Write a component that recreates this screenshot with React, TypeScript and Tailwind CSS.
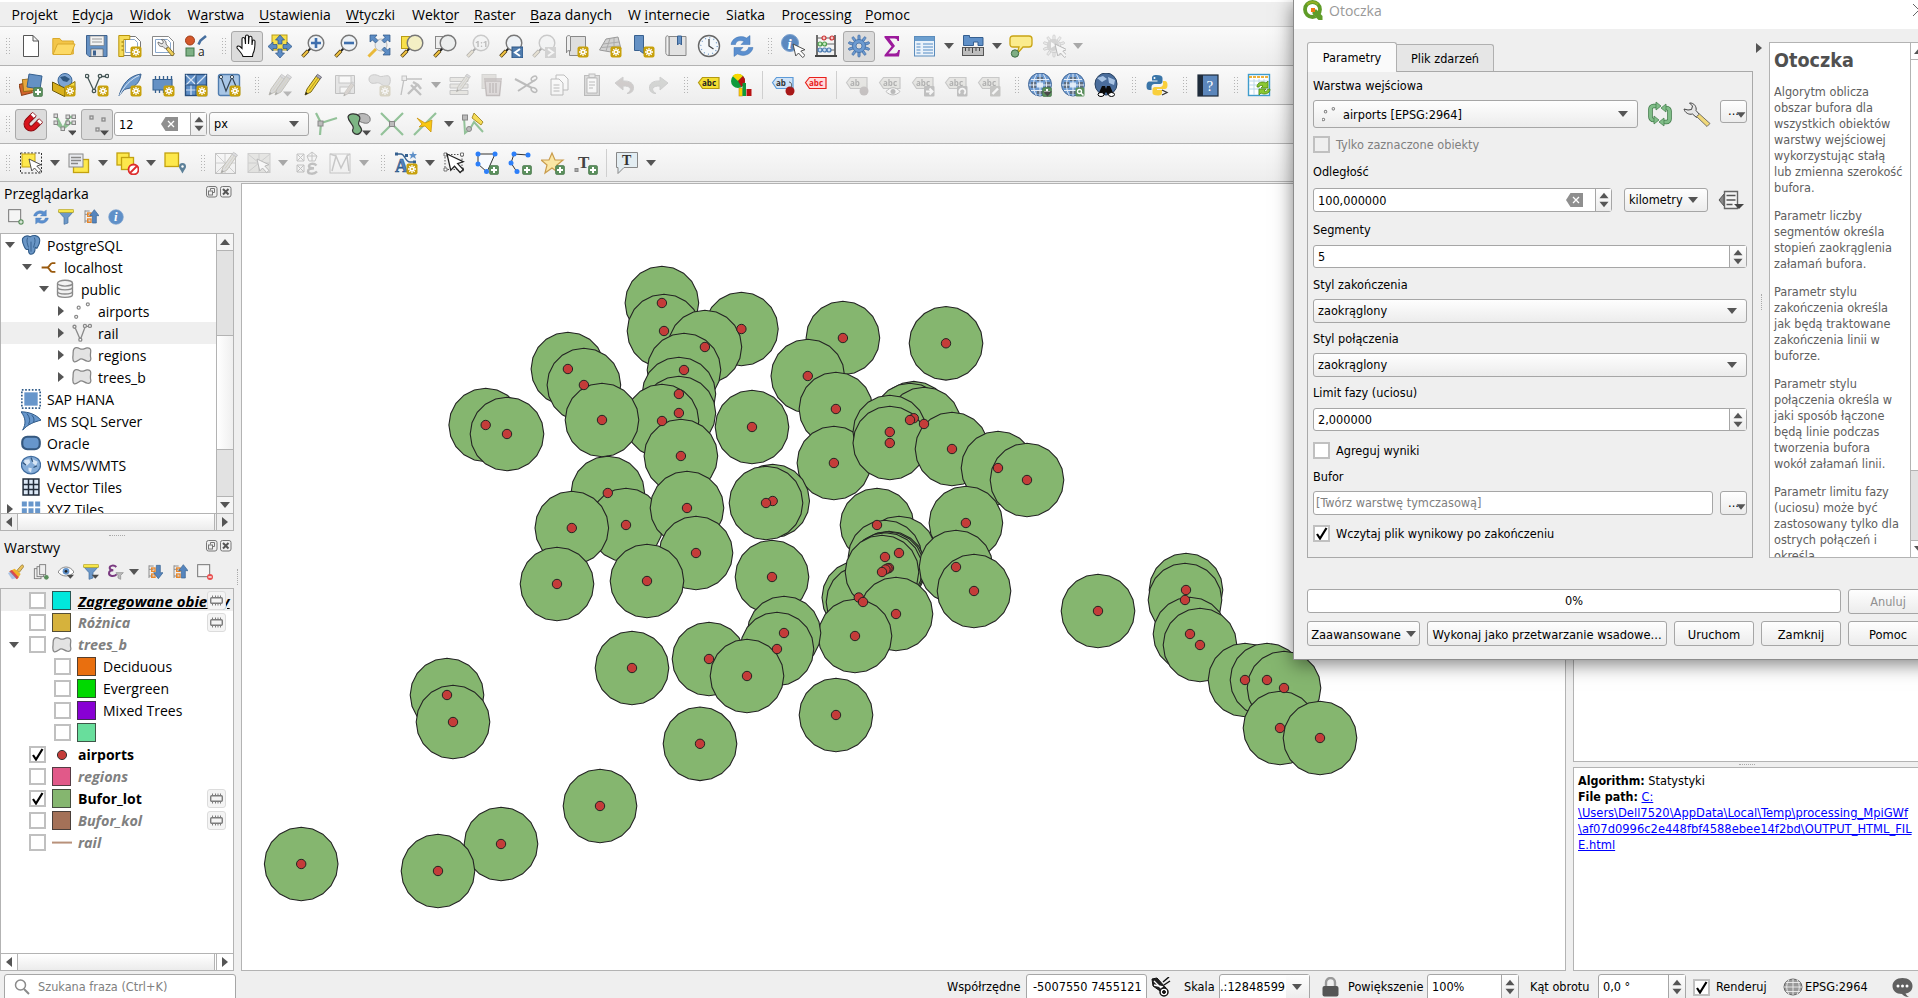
import React, { ReactNode } from "react";

const UI = "font-['Open_Sans','Noto_Sans',sans-serif] text-[14px]";
const DLG = "font-['DejaVu_Sans_Condensed','DejaVu_Sans',sans-serif] text-[12.6px]";

/* ---------- small drawing helpers ---------- */

function Ico({ children, dim, size = 24 }: { children: ReactNode; dim?: boolean; size?: number }) {
  return (
    <svg width={size} height={size} viewBox="0 0 24 24" fill="none" className={dim ? "shrink-0 opacity-35 grayscale-[0.7]" : "shrink-0"}>
      {children}
    </svg>
  );
}

const Star = () => (
  <g>
    <rect x="12.5" y="12.5" width="11" height="11" rx="2" fill="#c8a10c" />
    <path d="M18 14v8M14 18h8M15.3 15.3l5.4 5.4M20.7 15.3l-5.4 5.4" stroke="#fff" strokeWidth="1.3" />
    <circle cx="18" cy="18" r="1" fill="#c8a10c" />
  </g>
);
const Plus = () => (
  <g>
    <rect x="14.5" y="14.5" width="9" height="9" rx="1.5" fill="#5a8f5c" stroke="#3f6f43" strokeWidth=".6" />
    <path d="M19 16v6M16 19h6" stroke="#fff" strokeWidth="2" />
  </g>
);
const Drop = () => <path d="M15 18.5h9l-4.5 5z" fill="#4a4a4a" />;

function Tri({ dim, dir = "down", className = "" }: { dim?: boolean; dir?: "down" | "up" | "right" | "left"; className?: string }) {
  const d = { down: "M0 2h10L5 8z", up: "M0 8h10L5 2z", right: "M2 0v10l6-5z", left: "M8 0v10L2 5z" }[dir];
  return (
    <svg width="10" height="10" viewBox="0 0 10 10" className={`shrink-0 ${className}`}>
      <path d={d} fill={dim ? "#a8a8a8" : "#555"} />
    </svg>
  );
}

const Lens = ({ fill = "#eef2f6" }: { fill?: string }) => (
  <g>
    <path d="M9.5 14.5L6 18" stroke="#222" strokeWidth="2" />
    <path d="M7 16.8L1.5 22.5" stroke="#4b3a10" strokeWidth="3.6" />
    <path d="M6.8 17L1.8 22.2" stroke="#f2c443" strokeWidth="2" />
    <circle cx="15" cy="9" r="7.8" fill={fill} stroke="#777" strokeWidth="1.4" />
  </g>
);
const Pencil = ({ c = "#f2d43a" }: { c?: string }) => (
  <g>
    <path d="M4 22l2-6L16 2l4 2.5L10 19z" fill={c} stroke="#7a6a1a" strokeWidth="1" />
    <path d="M8 17.5L18 3.5" stroke="#b59a1c" strokeWidth="1" />
    <path d="M15 3.300l1.500-2 4 2.700-1.200 2z" fill="#aab" stroke="#667" strokeWidth=".8" />
    <path d="M4 22l1-3 2 1.400z" fill="#222" />
  </g>
);
const Cursor = ({ x = 10, y = 8 }: { x?: number; y?: number }) => (
  <path transform={`translate(${x} ${y}) scale(.92)`} d="M0 0l3 13 3-3.200 4.500 5 2.500-2.400-4.500-4.700 4.500-1.500z" fill="#fff" stroke="#444" strokeWidth="1" />
);
const Gear = ({ c = "#6d9bd1", s = "#3f6ca5" }: { c?: string; s?: string }) => (
  <g>
    {[0, 36, 72, 108, 144, 180, 216, 252, 288, 324].map((a) => (
      <rect key={a} x="10.9" y="1" width="2.200" height="6" rx="1" fill={c} stroke={s} strokeWidth=".7" transform={`rotate(${a} 12 12)`} />
    ))}
    <circle cx="12" cy="12" r="6.500" fill={c} stroke={s} strokeWidth=".8" />
    <circle cx="12" cy="12" r="3" fill="#dcdcdc" stroke={s} strokeWidth=".8" />
  </g>
);
const Tag = ({ fill, stroke, color, text = "abc", y = 4 }: { fill: string; stroke: string; color: string; text?: string; y?: number }) => (
  <g>
    <path d={`M1.500 ${y + 5.500}l4-5H22v11H5.500z`} fill={fill} stroke={stroke} strokeWidth="1.200" />
    <text x="5" y={y + 9} fontSize="8" fontWeight="bold" fontFamily="Open Sans" fill={color}>
      {text}
    </text>
  </g>
);
const Globe = () => (
  <g>
    <circle cx="12" cy="11.500" r="11.500" fill="#6d9ad0" stroke="#476a98" strokeWidth="1" />
    <path d="M9 4h6v4H9zM3 9h5v6H3zM17 9h5v6h-5zM9 17h6v4H9z" fill="#555" opacity=".65" />
    <path d="M9 9.500h6v5H9z" fill="#dbe8f6" />
    <path d="M1 12h22M12 1v22M3 6.500h18M3 17.500h18M8.500 1.500c-4 6-4 15 0 21M15.500 1.500c4 6 4 15 0 21" stroke="#e6eef8" strokeWidth="1" />
  </g>
);
const Refresh = () => (
  <g fill="#5b8fcf" stroke="#3f73b0" strokeWidth=".5">
    <path d="M1 10.500C2 4 10 .5 16.500 4L20 1.500v9h-9l3-3C10 5.500 6 7 5.500 10.500z" />
    <path d="M23 13.500c-1 6.500-9 10-15.500 6.500L4 22.500v-9h9l-3 3c4 2 8 .5 8.500-3z" />
  </g>
);
const FunnelShape = () => (
  <g>
    <path d="M1 4h22l-8 9v8l-6 2V13z" fill="#6d98c8" stroke="#3f6c9f" strokeWidth="1" />
    <rect x="1" y="1" width="22" height="4" fill="#f7e64a" stroke="#b8a51c" />
  </g>
);
const Poly = () => (
  <path d="M2.500 4.500C4 2.500 7 3 9.500 4.500 12.500 6.300 15 4 18 3.500c3-.3 4.500 1 4.500 3.500 0 3-1 5 0 8.500.6 3-1.500 4.500-4 4-4-1-6-4-9-2.500-2.500 1.500-4.500 4-7 3C.5 19 .8 16 1.200 12.500 1.600 9 .8 6.500 2.500 4.500z" fill="#e3e3e3" stroke="#858585" strokeWidth="1.500" />
);
const Dots = () => (
  <g stroke="#8a8a8a" strokeWidth="1.500" fill="#fff">
    <circle cx="5" cy="19" r="1.800" /><circle cx="8" cy="8" r="1.800" /><circle cx="19" cy="4" r="1.800" />
  </g>
);
const VLine = ({ c = "#8a8a8a" }: { c?: string }) => (
  <g stroke={c} strokeWidth="1.600" fill="#fff">
    <path d="M3 4l7 16 6-16h6" fill="none" />
    <circle cx="3" cy="4.500" r="1.800" /><circle cx="10" cy="20" r="1.800" /><circle cx="15.500" cy="3.500" r="1.800" /><circle cx="21.500" cy="3.500" r="1.800" />
  </g>
);
const Points3 = () => (
  <g fill="none" stroke="#8a8a8a" strokeWidth="1.300">
    <rect x="5" y="4" width="3" height="3" /><rect x="17" y="6" width="3" height="3" /><rect x="11" y="16" width="3" height="3" />
  </g>
);

/* ---------- toolbar icons ---------- */

const icons = {
  newFile: <path d="M4.500 1.500h9.500l5.500 5.500v15.500h-15zM14 1.500V7h5.500" fill="#fff" stroke="#555" />,
  open: (
    <g stroke="#d9a92c"><path d="M.8 20V4.500h7l2 2.500h11.500V20z" fill="#f3c548" /><path d="M1 20.500L5.500 10H23l-4 10.500z" fill="#fcd965" /></g>
  ),
  save: (
    <g><path d="M1.500 1.500h20.500v21H4l-2.500-2.500z" fill="#6591c4" stroke="#3e628f" /><rect x="5" y="2" width="14" height="9.500" fill="#f3f3f3" stroke="#777" strokeWidth=".6" /><path d="M7 5h10M7 8h10" stroke="#999" /><rect x="6" y="15" width="12" height="7.500" fill="#e3e3e3" stroke="#555" strokeWidth=".6" /><rect x="8" y="16.500" width="3" height="5" fill="#3e628f" /></g>
  ),
  layout: (
    <g><path d="M4.500 2.500h13l5 5v14h-18z" fill="#fff" stroke="#777" /><path d="M7.500 5.500h9l3 3v10h-12z" stroke="#8aa8cc" /><path d="M.8 1.500h11v4h-6v17h-5z" fill="#f6dc58" stroke="#b9950f" /><path d="M3.500 8h2M3.500 12h2M3.500 16h2" stroke="#8a6c00" /><Star /></g>
  ),
  manager: (
    <g><path d="M1.500 2.500h16l5 5v14h-21z" fill="#fff" stroke="#888" /><path d="M4.500 5.500h12l3 3v10h-15z" stroke="#8aa8cc" /><path d="M7 8c0 4 3 5 5 4.500l2.500 2.500 2.500-2.500-2-2.500C15.500 7 13 5 10.500 5.500l2 2.500-1.500 2z" fill="#e2e2e2" stroke="#555" strokeWidth=".8" /><path d="M15 15l6 7 2.500-2-6-7z" fill="#efcf5b" stroke="#6f5c1c" strokeWidth=".8" /></g>
  ),
  style: (
    <g><circle cx="6" cy="6.500" r="4.500" fill="#d4572a" stroke="#9e3b16" /><path d="M14.500 10.500l2-4L22 2" stroke="#466f9f" strokeWidth="2.600" /><rect x="2" y="14" width="8" height="8" fill="#7fb186" stroke="#3f7448" /><text x="14" y="22" fontSize="12" fontFamily="Open Sans" fill="#222">a</text></g>
  ),
  hand: <path d="M8 22.500c-1-3-4-6-6-8.500-.5-2 1.500-2.500 3-1.500l2 2V5c0-2 2.500-2 3 0l.5 5V2.500c0-2 3-2 3 0V10l.5-6.500c.5-1.800 3-1.500 3 .5V11l.5-4c.5-1.500 2.500-1.200 2.500.5 0 5 0 9-2 12l-.5 3z" fill="#fff" stroke="#111" strokeWidth="1.100" />,
  pan: (
    <g><rect x="4" y="1" width="15" height="15" fill="#f8e04a" stroke="#b89c18" /><g fill="#5c8cc4" stroke="#2d5584" strokeWidth=".7"><path d="M12 1l4.500 5H14v4h-4V6H7.500z" /><path d="M12 24l4.500-5H14v-4h-4v4H7.500z" /><path d="M0 12.500L5 8v2.500h4v4H5V17z" /><path d="M24 12.500L19 8v2.500h-4v4h4V17z" /></g></g>
  ),
  zoomIn: <g><Lens /><path d="M15 4v10M10 9h10" stroke="#3e6fae" strokeWidth="2.600" /></g>,
  zoomOut: <g><Lens /><path d="M10 9h10" stroke="#3e6fae" strokeWidth="2.600" /></g>,
  zoomFull: (
    <g><path d="M9 15L1.500 22.500" stroke="#e9b93a" strokeWidth="3" /><circle cx="14" cy="11" r="6" fill="#e9edf1" stroke="#bbb" /><g fill="#5c8cc4" stroke="#2d5584" strokeWidth=".7"><path d="M3 1h7L8 3.500l3 3L8.500 9l-3-3L3 8z" /><path d="M23 1h-7l2 2.500-3 3L17.500 9l3-3L23 8z" /><path d="M23 21h-7l2-2.500-3-3 2.500-2.500 3 3L23 14z" /></g></g>
  ),
  zoomSel: <g><rect x="1.500" y="2.500" width="12" height="12" fill="#f8e04a" stroke="#b89c18" /><Lens fill="#f3efc4" /></g>,
  zoomLayer: <g><rect x="2.500" y="2.500" width="12" height="12" fill="#eee" stroke="#888" /><Lens fill="#eceeee" /></g>,
  zoomNative: <g><Lens /><text x="9" y="12.500" fontSize="9" fontWeight="bold" fontFamily="Open Sans" fill="#555">1:1</text></g>,
  zoomLast: <g><Lens /><rect x="13" y="13" width="11" height="11" fill="#4f7cae" stroke="#2d5584" /><path d="M21 15l-5 3.500 5 3.500" stroke="#fff" strokeWidth="2" /></g>,
  zoomNext: <g><Lens /><rect x="13" y="13" width="11" height="11" fill="#999" /><path d="M16 15l5 3.500-5 3.500" stroke="#fff" strokeWidth="2" /></g>,
  newMap: <g><path d="M4.500 2.500h16v19h-16z" fill="#dedede" stroke="#888" /><path d="M1.500 3c1-2 4-2 4 0v14c-2-1-4 0-4 2z" fill="#efefef" stroke="#888" /><Star /></g>,
  map3d: <g><path d="M1.500 16L8 5l12-2 3 12-10 3z" fill="#d2d2d2" stroke="#999" /><path d="M5 10l16-2M3 13.500l19-1.500M12 4.500L8 17M16 4l0 13" stroke="#aaa" /><Star /></g>,
  bookmark: <g><path d="M3.500 1.500h9v18l-4-3-5 0z" fill="#6591c4" stroke="#38608f" /><Star /></g>,
  bookmarks: <g><path d="M5 2.500h17v19H5z" fill="#e2e2e2" stroke="#888" /><path d="M1.800 4c0-3 3.200-3 3.200 0v17.500c-2 0-3.200-1-3.200-3z" fill="#f0f0f0" stroke="#888" /><path d="M13.500 2h4v9l-2-2-2 2z" fill="#6591c4" stroke="#38608f" /></g>,
  clock: (
    <g><circle cx="12" cy="12" r="10.500" fill="#f4f8fb" stroke="#666" strokeWidth="1.400" /><circle cx="12" cy="12" r="8.200" stroke="#7aa0cc" strokeDasharray="1 3.300" strokeWidth="1.400" /><path d="M12 5v7l4.500 3" stroke="#444" strokeWidth="1.300" /></g>
  ),
  refresh: <Refresh />,
  identify: <g><circle cx="9" cy="9" r="8.500" fill="#5b88bf" stroke="#7ea3cf" /><text x="6.500" y="14.500" fontSize="15" fontStyle="italic" fontWeight="bold" fontFamily="Liberation Serif" fill="#fff">i</text><Cursor x={12} y={10} /></g>,
  abacus: (
    <g><path d="M3 1v20M21 1v20" stroke="#444" strokeWidth="1.500" /><path d="M3 4h18M3 10h18M3 16h18" stroke="#666" /><path d="M1 22h22" stroke="#444" strokeWidth="2" /><g strokeWidth="1.200"><g fill="#f7c5c5" stroke="#c33"><circle cx="10" cy="4" r="2" /><circle cx="18" cy="4" r="2" /></g><g fill="#c9efc4" stroke="#4a9a4a"><circle cx="6" cy="10" r="2" /><circle cx="10.500" cy="10" r="2" /></g><g fill="#c6dcf2" stroke="#4a7ab0"><circle cx="6" cy="16" r="2" /><circle cx="10.500" cy="16" r="2" /><circle cx="15" cy="16" r="2" /></g></g></g>
  ),
  gear: <Gear />,
  sigma: <path d="M4.500 2h14.500v5h-1.500c-.5-1.800-1-2.500-3-2.500H9.500l5.500 7.500-6.500 7.500h6c2.500 0 3-1 3.800-3.500H20l-1 6.500H4.500v-1.500l7-8.500-7-9z" fill="#9c1a9c" />,
  table: <g><rect x="1.500" y="2.500" width="20" height="19.500" fill="#eaf2fa" stroke="#5b8cbc" /><rect x="2" y="3" width="19" height="4" fill="#6c9fcf" /><path d="M3.500 10h4M10 10h10M3.500 13h4M10 13h10M3.500 16h4M10 16h10M3.500 19h4M10 19h10" stroke="#86aed6" strokeWidth="1.400" /></g>,
  measure: <g><path d="M2.500 1.500h6V3.500h13.500v8h-5V8h-4.500v3.500h-10z" fill="#5f90c8" stroke="#355f90" /><rect x="1.500" y="13.500" width="21" height="8" fill="#bdbdbd" stroke="#555" /><path d="M4.500 14v3M8 14v3M11.500 14v5M15 14v3M18.500 14v3" stroke="#444" /></g>,
  note: <g><path d="M4 2h16c2 0 3 1 3 3v5c0 2-1 3-3 3h-6l-6 7 2-7H4c-2 0-3-1-3-3V5c0-2 1-3 3-3z" fill="#fbec8d" stroke="#c9a415" strokeWidth="1.300" /><circle cx="6" cy="19.500" r="3.700" fill="#7fae84" stroke="#3d6c43" /></g>,
  action: <g><Gear c="#ddd" s="#777" /><circle cx="11" cy="11" r="6" fill="#999" /><path d="M9 8l5 3-5 3z" fill="#fff" /><Cursor x={13} y={10} /></g>,

  datasource: <g><rect x="1" y="10" width="11" height="11" fill="#d2642c" stroke="#8c3d14" transform="rotate(-14 7 15)" /><rect x="4" y="6" width="13" height="12" fill="#e8a83d" stroke="#9a6a18" transform="rotate(-6 10 12)" /><path d="M10 1l13 2-2 13-13-2z" fill="#6591c4" stroke="#35608f" /><Plus /></g>,
  geopackage: <g><circle cx="13" cy="7.500" r="7" fill="#7da4d2" stroke="#3b6697" /><path d="M8 4l5-1 5 3-3 3-4-1z" fill="#2f567f" /><path d="M.5 9l12 6v8.500l-12-6z" fill="#d9b01c" stroke="#6e5a0b" /><path d="M12.500 15L23 8.500V17l-10.500 6.500z" fill="#fbe24a" stroke="#8a7310" /><Star /></g>,
  newShape: <g><g stroke="#455" strokeWidth="1.300" fill="#fff"><path d="M2 3l7 15 6-14.500h7" fill="none" /><circle cx="2" cy="3" r="1.700" /><circle cx="9" cy="18" r="1.700" /><circle cx="15" cy="3" r="1.700" /><circle cx="22" cy="3" r="1.700" /></g><Star /></g>,
  feather: <g><path d="M1 23C4 12 10 3 23 1c-1 8-5 12-11 14-3 1-5 .5-7 3z" fill="#6f9bcd" stroke="#39608f" /><path d="M1.500 22.500C6 13 13 6 21 2.500" stroke="#dce9f6" /><Star /></g>,
  chip: <g><path d="M4.500 3v17M8.500 3v17M12.500 3v17M16.500 3v17M20.500 3v17" stroke="#35608f" strokeWidth="1.300" /><rect x="2" y="6.500" width="19" height="10.500" fill="#6591c4" stroke="#35608f" /><Star /></g>,
  mesh: <g><rect x="1.500" y="1.500" width="21" height="21" fill="#5f8fc7" stroke="#284e7c" strokeWidth="1.400" /><path d="M2 2l10 10M2 12L12 2M12 12L22 2M7 12v10M2 17h20" stroke="#d6e4f3" strokeWidth="1.200" /><path d="M12 1.500v21M1.500 12h21" stroke="#284e7c" /><Star /></g>,
  newVirtual: <g><rect x="1.500" y="1.500" width="21" height="21" rx="2" fill="#a8c6e6" stroke="#4f7cae" strokeWidth="1.400" /><path d="M4 4l5 14L15 4l6 14" stroke="#345" strokeWidth="1.200" /><circle cx="4" cy="4" r="1.600" fill="#fff" stroke="#345" /><circle cx="15" cy="4" r="1.600" fill="#fff" stroke="#345" /><Star /></g>,
  edits: <g><g transform="translate(-3 0)"><Pencil c="#aaa" /></g><g transform="translate(3 0)"><Pencil c="#999" /></g><Drop /></g>,
  pencil: <Pencil />,
  saveEdits: <g><path d="M1.500 2.500h19v18h-19z" fill="#ccc" stroke="#666" /><rect x="5" y="3" width="12" height="7" fill="#fff" stroke="#777" /><rect x="6" y="14" width="10" height="6" fill="#fff" stroke="#777" /><g transform="translate(7 8) scale(.68)"><Pencil c="#c99" /></g></g>,
  addPoly: <g><path d="M2 6c0-5 7-5 10-3s10-3 11 2-1 9-5 8-5-4-9-3S2 10 2 6z" fill="#bbb" stroke="#777" /><Star /></g>,
  vertex: <g><path d="M1 22L4 6h18" stroke="#666" strokeWidth="1.300" /><rect x="2" y="3" width="4.500" height="4.500" fill="#ddd" stroke="#666" /><path d="M8 21l9-9M13 9l5 3 3 4M11 12l10 10" stroke="#666" strokeWidth="2.400" /></g>,
  tableEdit: <g><path d="M2 4.500h18v4H2zM2 11h18v4H2zM2 17.500h18v4H2z" fill="#d8d0b0" stroke="#777" /><g transform="translate(5 0) scale(.85)"><Pencil c="#bbb" /></g></g>,
  trash: <g><rect x="1" y="1.500" width="14" height="14" fill="#c9b6a0" stroke="#998" /><path d="M4 8h16l-1.500 14.500h-13zM3 6h18" fill="#cfa9a9" stroke="#855" strokeWidth="1.400" /><path d="M9 10v10M12 10v10M15 10v10" stroke="#855" strokeWidth="1.500" /></g>,
  cut: <g><path d="M1 6l17 9M4 18l17-11" stroke="#555" strokeWidth="2" /><ellipse cx="20" cy="5.500" rx="3" ry="2" stroke="#555" strokeWidth="1.500" transform="rotate(-30 20 5.500)" /><ellipse cx="20" cy="17" rx="3" ry="2" stroke="#555" strokeWidth="1.500" transform="rotate(30 20 17)" /></g>,
  copy: <g fill="#fff" stroke="#555"><path d="M9 2h8l4 4v11H9z" /><path d="M4 6h8l4 4v12H4z" /><path d="M6.500 12h6M6.500 15h6M6.500 18h6" /></g>,
  paste: <g fill="#fff" stroke="#555"><rect x="4.500" y="2.500" width="15" height="20" fill="#aaa" /><path d="M7 5h10v15H7z" /><rect x="9" y="1" width="6" height="3.500" fill="#ccc" /><path d="M9 9h6M9 12h6M9 15h4" /></g>,
  undo: <path d="M2 10l8-6v4c7-.5 11 2.500 10.500 7.500-.5 3.500-3 5-6.500 5 2.500-1.500 4-3.500 3-5.500-1-1.500-3.500-2-7-2v4z" fill="#a08078" stroke="#888" />,
  redo: <path d="M22 10l-8-6v4C7 7.500 3 10.500 3.500 15.500c.5 3.500 3 5 6.500 5-2.500-1.500-4-3.500-3-5.500 1-1.500 3.500-2 7-2v4z" fill="#93a090" stroke="#888" />,
  abc: <Tag fill="#f4de32" stroke="#b49a10" color="#222" />,
  diagram: <g><path d="M8 8V1.500A7 7 0 0 1 13.500 5z" fill="#f8d800" /><circle cx="8" cy="8" r="7" fill="#0f9a3c" /><path d="M8 8L2.500 3A7 7 0 0 1 13 3z" fill="#f8d800" /><path d="M8 8l5-5a7 7 0 0 1-1.500 11z" fill="#b81212" /><rect x="9" y="15" width="3.500" height="8" fill="#f8d800" stroke="#c8821c" strokeWidth=".6" /><rect x="12.500" y="10" width="3.500" height="13" fill="#0f9a3c" /><rect x="16.500" y="16" width="5" height="7" fill="#b81212" /></g>,
  pinLabel: <g><Tag fill="#cfe3f7" stroke="#5e9bd8" color="#333" text="ab" /><circle cx="19" cy="18" r="4.500" fill="#a81818" /><path d="M18 9c3 0 3 4 2 6" stroke="#555" /></g>,
  abcRed: <Tag fill="#ffdcdc" stroke="#e8201c" color="#e8201c" />,
  tagPin: <g><Tag fill="#cfcbb0" stroke="#777" color="#333" text="ab" /><circle cx="19" cy="18" r="4.500" fill="#866" /></g>,
  tagEye: <g><Tag fill="#cfcbb0" stroke="#777" color="#333" /><path d="M8 18.500c4-5 10-5 14 0-4 4.500-10 4.500-14 0z" fill="#fff" stroke="#555" /><circle cx="15" cy="18.500" r="2.500" fill="#555" /></g>,
  tagMove: <g><Tag fill="#cfcbb0" stroke="#777" color="#333" /><rect x="13" y="13" width="10.500" height="10.500" rx="1" fill="#666" /><path d="M15 18.500h6M18.500 15.500l3 3-3 3" stroke="#fff" strokeWidth="2" /></g>,
  tagRotate: <g><Tag fill="#cfcbb0" stroke="#777" color="#333" /><rect x="13" y="13" width="10.500" height="10.500" rx="1" fill="#666" /><path d="M16 20.500a3 3 0 1 1 4 .5" stroke="#fff" strokeWidth="1.800" /></g>,
  tagEdit: <g><Tag fill="#cfcbb0" stroke="#777" color="#333" /><rect x="13" y="13" width="10.500" height="10.500" rx="1" fill="#776" /><path d="M15.500 21l5.500-5.500" stroke="#fff" strokeWidth="2.400" /></g>,
  globeAdd: <g><Globe /><Plus /><Drop /></g>,
  globeFind: <g><Globe /><rect x="14.500" y="14.500" width="9" height="9" rx="1.500" fill="#5a8f5c" /><circle cx="18.500" cy="18.500" r="2" stroke="#fff" strokeWidth="1.300" /><path d="M20 20l2.500 2.500" stroke="#fff" strokeWidth="1.500" /></g>,
  binoculars: <g><circle cx="12" cy="11" r="11" fill="#4a6d9c" stroke="#27405f" /><path d="M3 5l6-2 4 3-5 3zM14 4l7 3-1 5-5-2z" fill="#a9c4e4" /><path d="M4 22l4-9h3l1 3 1-3h3l4 9h-6l-2-3-2 3z" fill="#0a0a0a" /><ellipse cx="7" cy="21.500" rx="3" ry="2" fill="#fff" stroke="#000" /><ellipse cx="17.500" cy="21.500" rx="3" ry="2" fill="#fff" stroke="#000" /></g>,
  python: (
    <g><path d="M11.500 2c-4 0-4.500 1.500-4.500 3v2.500h5.500v1H4.500C2.500 8.500 1.500 10 1.500 13s1 4 3 4H6.500v-3c0-2 1.500-3 3-3H15c1.500 0 2.500-1 2.500-2.500V5c0-2-2-3-6-3z" fill="#3a75a8" /><path d="M12.500 22.500c4 0 4.500-1.500 4.500-3V17h-5v-1h8c1.500 0 2.500-1.500 2.500-4s-1-4-2.500-4h-2v3c0 2-1.500 3-3 3H10c-1.500 0-2.500 1-2.500 2.500V20c0 1.500 1.500 2.500 5 2.500z" fill="#f9cf3c" /><circle cx="9.500" cy="5" r="1" fill="#fff" /><path d="M17 17l5 2.500-5 2.500" stroke="#333" strokeWidth="1.300" /></g>
  ),
  help: <g><rect x="2" y="2" width="20" height="21" fill="#5b86bb" stroke="#1e2b3a" strokeWidth="1.200" /><rect x="2" y="2" width="5" height="21" fill="#1e2b3a" /><text x="10.500" y="18" fontSize="15" fontFamily="Liberation Serif" fill="#fff">?</text></g>,
  sheet: <g><rect x="1.500" y="1.500" width="21" height="21" fill="#fdfeff" stroke="#3f9ccc" strokeWidth="1.400" /><path d="M2 4h20" stroke="#efb23a" strokeWidth="2" strokeDasharray="3 1" /><path d="M2 8h20M2 12h20M2 16h20M7 6v16M12 6v16M17 6v16" stroke="#bcd8ea" /><path d="M10 14c0-5 6-6 9-4l2-2v7h-7l2-2c-2-1-4-.5-4 1z" fill="#8cc832" stroke="#4c8a10" strokeWidth=".8" /><path d="M23 16c0 5-6 6-9 4l-2 2v-6h7l-2 2c2 1 3 0 4-2z" fill="#8cc832" stroke="#4c8a10" strokeWidth=".8" /></g>,

  magnet: <g transform="rotate(45 12 12)"><path d="M5 4v8a7 7 0 0 0 14 0V4h-5v8a2 2 0 0 1-4 0V4z" fill="#d8141c" stroke="#8c0a10" /><path d="M5 2.500h5V6H5zM14 2.500h5V6h-5z" fill="#fff" stroke="#8c0a10" strokeWidth=".8" /></g>,
  snapV: <g transform="translate(1 0)"><path d="M3 4l7 13L16 5h6M3 11l7 6 7-6h5" stroke="#8cbf92" strokeWidth="2.400" /><g fill="#ddd" stroke="#888" strokeWidth="1"><rect x="1" y="2" width="3.500" height="3.500" /><rect x="1" y="9" width="3.500" height="3.500" /><rect x="8" y="15" width="3.500" height="3.500" /><rect x="13" y="3" width="3.500" height="3.500" /><rect x="19" y="3" width="3.500" height="3.500" /><rect x="13" y="9" width="3.500" height="3.500" /><rect x="19" y="9" width="3.500" height="3.500" /></g><Drop /></g>,
  snapPts: <g><Points3 /><Drop /></g>,
  topo: <g><path d="M2 1l5 10-1 12M7 11l16-5" stroke="#93c299" strokeWidth="2.200" /><rect x="4" y="9" width="5" height="5" fill="#bbb" stroke="#888" /></g>,
  overlap: <g><path d="M10 3c5-3 12-1 13 3s-2 6-6 5-8-3-7-8z" fill="#b9b9b9" stroke="#777" /><path d="M1 5c1-4 8-4 11-1s-2 6 0 9 4 5 1 8-9 0-7-4-5-7-5-12z" fill="#7db584" stroke="#333" strokeWidth="1.200" /><Drop /></g>,
  cross: <g><path d="M1 1l22 22M23 1L1 23" stroke="#93c299" strokeWidth="2.200" /><rect x="9.500" y="9.500" width="5" height="5" fill="#bbb" stroke="#888" /></g>,
  selfSnap: <g><path d="M23 1L1 23" stroke="#93c299" strokeWidth="2.200" /><path d="M4 6l8 5 7-3-1 12-6-6-6 1 3-3z" fill="#f8c811" stroke="#c78d00" strokeWidth=".7" /></g>,
  trace: <g><path d="M3 5l1 16 5-4 4-7 9 10" stroke="#93c299" strokeWidth="2" /><rect x="1.500" y="3" width="5" height="5" fill="#bbb" stroke="#888" /><circle cx="8" cy="17" r="2.500" fill="#bbb" stroke="#888" /><path d="M13 1l-2 5 9 7 2-3z" fill="#f6dc58" stroke="#967a12" strokeWidth=".8" /></g>,

  select: <g><rect x="1.500" y="2" width="21" height="20" stroke="#333" strokeDasharray="2 1.500" /><rect x="3" y="3" width="13" height="13" fill="#fde84c" stroke="#c3a20f" /><Cursor x={10} y={8} /></g>,
  selForm: <g><rect x="6.500" y="8.500" width="15" height="13" fill="#fde84c" stroke="#c3a20f" strokeWidth="1.300" /><rect x="2" y="3" width="14" height="13" fill="#e8eaee" stroke="#888" /><path d="M4 6.500h10M4 9.500h10M4 12.500h7" stroke="#888" strokeWidth="1.300" /></g>,
  deselect: <g fill="#fde84c" stroke="#c3a20f" strokeWidth="1.300"><rect x="2" y="2" width="12" height="12" /><rect x="6.500" y="6.500" width="12" height="12" /><circle cx="18.500" cy="18.500" r="5" fill="#fff" stroke="#dd2c2c" strokeWidth="1.800" /><path d="M15 22l7-7" stroke="#dd2c2c" strokeWidth="1.800" /></g>,
  selLoc: <g><rect x="2" y="2" width="13.500" height="13.500" fill="#fde84c" stroke="#c3a20f" strokeWidth="1.300" /><path d="M19.500 22.500c-2-4-3.500-5-3.500-7a3.500 3.500 0 0 1 7 0c0 2-1.500 3-3.500 7z" fill="#5d8199" /><circle cx="19.500" cy="15.500" r="1.200" fill="#fff" /></g>,
  mesh1: <g><rect x="1.500" y="2.500" width="20" height="20" stroke="#666" /><path d="M2 3l19 19M21 3L2 22M11 3v19M2 12h19" stroke="#888" /><g transform="translate(3 0)"><Pencil c="#bbb" /></g></g>,
  mesh2: <g><rect x="1" y="2.500" width="22" height="19" fill="#c9c9b4" stroke="#888" /><path d="M1 3l22 18M23 3L1 21M12 3v18M1 12h22" stroke="#888" /><Cursor x={10} y={8} /></g>,
  mesh3: <g stroke="#666"><path d="M2 3h7v7H2zM2 3l7 7M9 3l-7 7M2 14h7v7H2zM2 14l7 7M9 14l-7 7M17 1l5 4-2 5h-6l-2-5zM17 1v9M12 5h10" /><path d="M21.500 14.500c-3-3-8-1.500-7.500 1 .3 1.500 2.500 1.700 5 1.700-3.500 0-6 .6-6 3 0 3 6 3.500 9 .3" strokeWidth="2.400" /></g>,
  mesh4: <g stroke="#777"><rect x="2" y="3" width="20" height="19" /><path d="M4 20L8 5l5 12 6-12 2 15M2 3l6 2M19 5l3-2" strokeWidth="1.500" /></g>,
  annot: <g><path d="M2 3h5c4 0 4 8 9 8h5" stroke="#35608f" strokeWidth="1.300" /><path d="M1 1.500h3v3H1zM11 3h3v3h-3zM19 9.500h3v3h-3z" fill="#35608f" /><path d="M19 0l1 3h3l-2 2 1 3-3-2-3 2 1-3-2-2h3z" fill="#5f90c8" /><text x="1" y="21" fontSize="18" fontWeight="bold" fontFamily="Liberation Serif" fill="#4f82bd" stroke="#27507f" strokeWidth=".6">A</text><Star /></g>,
  selAnnot: <g><rect x="3" y="3.500" width="17" height="15" stroke="#555" strokeDasharray="1.500 1.500" /><path d="M2 2h3v3H2zM18.500 2h3v3h-3zM2 17h3v3H2zM18.500 17h3v3h-3z" fill="#fff" stroke="#555" strokeWidth=".8" /><g transform="translate(5 3) scale(1.250)"><path d="M0 0l3 13 3-3.200 4.500 5 2.500-2.400-4.500-4.700 4.500-1.500z" fill="#fff" stroke="#222" /></g></g>,
  polyAnnot: <g><path d="M3 3h17l-8 18-9-8z" fill="#f7faff" stroke="#333" /><g fill="#2d7ff9"><circle cx="3" cy="3" r="2.500" /><circle cx="20" cy="3" r="2.500" /><circle cx="3" cy="13" r="2.500" /><circle cx="11.500" cy="20.500" r="2.500" /></g><Plus /></g>,
  lineAnnot: <g><path d="M20 4L6 3 3 12l6 9" stroke="#333" /><g fill="#2d7ff9"><circle cx="20" cy="4" r="2.500" /><circle cx="6" cy="3" r="2.500" /><circle cx="3" cy="12" r="2.500" /><circle cx="9" cy="20.500" r="2.500" /></g><Plus /></g>,
  starAnnot: <g><path d="M11 2l3 7h8l-6 5 2 8-7-5-7 5 2-8-6-5h8z" fill="#fbe7a4" stroke="#c99c4c" strokeWidth="1.200" /><Plus /></g>,
  textAnnot: <g><text x="4" y="17" fontSize="17" fontWeight="bold" fontFamily="Liberation Serif" fill="#444">T</text><rect x="1" y="17.500" width="3" height="3" fill="#aaa" stroke="#888" /><Plus /></g>,
  textBox: <g><path d="M1.500 1.500h21v15H9l-6 6V16.500H1.500z" fill="#e3edf2" stroke="#888" /><text x="7" y="14" fontSize="14" fontWeight="bold" fontFamily="Liberation Serif" fill="#333">T</text></g>,
};
type IconName = keyof typeof icons;

/* ---------- toolbars ---------- */

function Handle({ first }: { first?: boolean }) {
  return (
    <svg width={first ? 14 : 17} height="18" className="shrink-0">
      <path d={first ? "M6.500 1v16M9.500 1v16" : "M9.500 1v16M12.500 1v16"} stroke="#b4b4b4" strokeDasharray="1 2" />
    </svg>
  );
}
const Sep = () => <div className="flex h-7 w-[7px] shrink-0 justify-center"><div className="h-full w-px bg-[#cfcfcf]" /></div>;

function Btn({ name, dim, on }: { name: IconName; dim?: boolean; on?: boolean }) {
  return (
    <div className={`flex h-[31px] w-8 shrink-0 items-center justify-center rounded-[3px] ${on ? "border border-[#a9a9a9] bg-[#dcdcdc]" : ""}`}>
      <Ico dim={dim}>{icons[name]}</Ico>
    </div>
  );
}
function Arrow({ dim }: { dim?: boolean }) {
  return <div className="-ml-px flex w-[15px] shrink-0 justify-center"><Tri dim={dim} /></div>;
}
/* Tokens: "-" handle, "|" separator, "v" menu arrow, "V" greyed menu arrow, "~" prefix greyed icon, "*" prefix pressed icon. */
function Items({ list }: { list: string }) {
  return (
    <>
      {list.split(" ").map((t, i) => {
        if (t === "-") return <Handle key={i} />;
        if (t === "|") return <Sep key={i} />;
        if (t === "v" || t === "V") return <Arrow key={i} dim={t === "V"} />;
        return <Btn key={i} name={t.replace(/^[~*]/, "") as IconName} dim={t[0] === "~"} on={t[0] === "*"} />;
      })}
    </>
  );
}
function Toolbar({ children, last }: { children: ReactNode; last?: boolean }) {
  return (
    <div className={`flex shrink-0 items-center gap-px border-b border-[#b3b3b3] bg-linear-to-b from-[#fafafa] to-[#ededed] ${last ? "h-[38px]" : "h-[39px]"}`}>
      <Handle first />
      {children}
    </div>
  );
}

const menu: [string, string, string, string][] = [
  ["Pro", "j", "ekt", "w-[60.5px]"], ["", "E", "dycja", "w-[58px]"], ["", "W", "idok", "w-[57.5px]"], ["W", "a", "rstwa", "w-[71.5px]"],
  ["", "U", "stawienia", "w-[87px]"], ["", "W", "tyczki", "w-[66px]"], ["Wekt", "o", "r", "w-[62px]"], ["", "R", "aster", "w-[56px]"],
  ["", "B", "aza danych", "w-[98px]"], ["W ", "i", "nternecie", "w-[98px]"], ["Siatka", "", "", "w-[55.5px]"], ["Pro", "c", "essing", "w-[83.5px]"], ["", "P", "omoc", "w-[60px]"],
];

/* ---------- form pieces ---------- */

const BOX = "border border-[#a6a6a6] rounded-[3px]";
const GRAD = "bg-linear-to-b from-[#fefefe] to-[#ececec]";

function Check({ on, off }: { on?: boolean; off?: boolean }) {
  return (
    <div className={`flex size-[17px] shrink-0 items-center justify-center border-2 border-[#c0c0c0] ${off ? "bg-[#efefef]" : "bg-white"}`}>
      {on && <svg width="13" height="13" viewBox="0 0 13 13"><path d="M2 7l3 4.500L11.500 1" fill="none" stroke="#000" strokeWidth="2.200" /></svg>}
    </div>
  );
}
function Steps({ w = "w-[17px]" }: { w?: string }) {
  return (
    <div className={`flex h-full shrink-0 flex-col items-center justify-center border-l border-[#a6a6a6] ${w} ${GRAD}`}>
      <Tri dir="up" className="h-[9px]" />
      <Tri className="h-[9px]" />
    </div>
  );
}
function Combo({ children, className = "" }: { children: ReactNode; className?: string }) {
  return <div className={`flex items-center pr-[9px] ${BOX} ${GRAD} ${className}`}><div className="flex flex-1 items-center whitespace-nowrap pt-px">{children}</div><Tri /></div>;
}
function Button({ children, className = "" }: { children: ReactNode; className?: string }) {
  return <div className={`flex shrink-0 items-center justify-center whitespace-nowrap pt-0.5 ${BOX} ${GRAD} ${className}`}>{children}</div>;
}
const Clear = () => (
  <svg width="17" height="14" viewBox="0 0 17 14" className="shrink-0"><path d="M0 7l4.500-7H17v14H4.500z" fill="#8f8f8f" /><path d="M7 4l6 6M13 4l-6 6" stroke="#fff" strokeWidth="1.300" /></svg>
);
const Label = ({ children, className }: { children: ReactNode; className: string }) => <div className={`h-4 leading-4 ${className}`}>{children}</div>;
const Dotted = ({ v }: { v?: boolean }) => (
  <div className={v ? "h-4 w-0 border-l border-dotted border-[#aaa]" : "h-0 w-4 border-t border-dotted border-[#aaa]"} />
);

/* ---------- docks ---------- */

function DockTitle({ children }: { children: ReactNode }) {
  return (
    <div className="flex h-6 shrink-0 items-center pl-1 pr-[2px]">
      <span className="flex-1 leading-5">{children}</span>
      <svg width="26" height="12" viewBox="0 0 26 12" fill="none" stroke="#777" className="-mt-1">
        <rect x=".5" y=".5" width="10.500" height="10.500" rx="2" /><rect x="2.500" y="5" width="4" height="4" /><path d="M4.500 4.500v-2h4v4h-2" />
        <rect x="14.500" y=".5" width="10.500" height="10.500" rx="2" /><path d="M17 3l5.500 5.500M22.500 3L17 8.500" stroke="#555" strokeWidth="2" />
      </svg>
    </div>
  );
}
function HScroll() {
  return (
    <div className="flex h-[17px] shrink-0 border-t border-[#b3b3b3]">
      <div className="flex w-[17px] items-center justify-center border-r border-[#b3b3b3]"><Tri dir="left" /></div>
      <div className="flex-1 border-r border-[#b3b3b3] bg-linear-to-b from-white to-[#ececec]" />
      <div className="ml-px flex w-[17px] items-center justify-center border-l border-[#b3b3b3]"><Tri dir="right" /></div>
    </div>
  );
}

const miniIcons: Record<string, ReactNode> = {
  addSel: <g><rect x="1" y="1" width="18" height="18" stroke="#777" strokeWidth="1.500" fill="#f5f5f5" /><circle cx="19.500" cy="19.500" r="4" fill="#5a8f5c" /><path d="M19.500 17v5M17 19.500h5" stroke="#fff" strokeWidth="1.500" /></g>,
  refresh: <Refresh />,
  funnel: <FunnelShape />,
  funnelDrop: <g><FunnelShape /><path d="M13 16h11l-5.500 6z" fill="#4a4a4a" /></g>,
  collapse: <g><path d="M3 2v19M3 8h7M3 18h7M3 3h7" stroke="#888" strokeWidth="1.400" /><rect x="7" y="6" width="5" height="5" stroke="#e8862a" strokeWidth="2" /><rect x="7" y="15" width="5" height="5" stroke="#e8862a" strokeWidth="2" /><path d="M17 1l7 9h-4v11h-6V10h-4z" fill="#5585be" stroke="#35608f" /></g>,
  expand: <g><path d="M3 2v19M3 8h7M3 18h7M3 3h7" stroke="#888" strokeWidth="1.400" /><rect x="7" y="6" width="5" height="5" stroke="#e8862a" strokeWidth="2" /><rect x="7" y="15" width="5" height="5" stroke="#e8862a" strokeWidth="2" /><path d="M17 22l7-9h-4V2h-6v11h-4z" fill="#5585be" stroke="#35608f" /></g>,
  info: <g><circle cx="12" cy="12" r="11" fill="#5f90c8" stroke="#7ea3cf" /><text x="9" y="18.500" fontSize="19" fontStyle="italic" fontWeight="bold" fontFamily="Liberation Serif" fill="#fff">i</text></g>,
  brush: <g><path d="M13 10l8-9 3 2.500-7 9z" fill="#e8c15a" stroke="#8b6a1c" /><path d="M2 11l8-4 9 8-5 8z" fill="#f0b429" /><path d="M2 11l4-2 10 11-3 3z" fill="#e04848" /><path d="M0 14l4-3 9 10-7 2z" fill="#5a8fd8" opacity=".45" /></g>,
  group: <g stroke="#777" strokeWidth="1.300" fill="#eee"><rect x="2" y="7" width="10" height="15" /><rect x="6" y="4" width="10" height="15" /><rect x="10" y="1" width="9" height="15" /><circle cx="20" cy="20" r="3.500" fill="#5a8f5c" stroke="none" /></g>,
  eye: <g><path d="M0 12C6 2 18 2 24 12 18 20 6 20 0 12z" fill="#fff" stroke="#888" strokeWidth="1.500" /><circle cx="12" cy="11" r="5" fill="#5f90c8" /><circle cx="12" cy="11" r="2" fill="#222" /><path d="M13 16h11l-5.500 6z" fill="#4a4a4a" /></g>,
  epsilon: <g><path d="M12.500 4.500C9 1 2.500 2 2.500 6c0 2.500 2.500 3.200 5.500 3.200C4.500 9.200 1.500 10.500 1.500 14c0 4.500 7.500 5.500 11.500 1.500" stroke="#7a3a80" strokeWidth="3" /><path d="M12 13h11l-4 4v6l-4-2v-4z" fill="#bbb" stroke="#888" /></g>,
  remove: <g><rect x="1" y="1" width="18" height="18" stroke="#777" strokeWidth="1.500" fill="#f5f5f5" /><circle cx="19.500" cy="19.500" r="4.500" fill="#e84c4c" /><path d="M17 19.500h5" stroke="#fff" strokeWidth="2" /></g>,
};

const treeIcons: Record<string, ReactNode> = {
  pg: <g><path d="M2 4C5 0 9 1 11 2c4-2 9-2 11 2 2 6-2 10-3 12l-2-1c0 3-1 8-5 8-3 0-3-3-3-6-2 1-4 0-5-3C2 10 1 7 2 4z" fill="#6a96c6" stroke="#2f5a88" strokeWidth="1.300" /><path d="M8 3c-2 4 0 8 1 12M16 3c2 4 0 8-1 12M12 8v12" stroke="#2f5a88" /></g>,
  conn: <path d="M1 12h10M23 5h-5c-4 0-4 7-8 7 4 0 4 7 8 7h5" stroke="#99590c" strokeWidth="3" />,
  db: <g stroke="#8a8a8a" strokeWidth="1.600" fill="#f2f2f2"><path d="M3 5v14c0 4 18 4 18 0V5" /><ellipse cx="12" cy="5" rx="9" ry="3.500" /><path d="M3 10c0 4 18 4 18 0M3 15c0 4 18 4 18 0" fill="none" /></g>,
  pts: <Dots />,
  line: <VLine />,
  poly: <Poly />,
  hana: <g><rect x="4" y="4" width="16" height="16" fill="#6796cb" /><rect x="1" y="1" width="22" height="22" stroke="#2f5a88" strokeWidth="2" strokeDasharray="2 2" /></g>,
  mssql: <path d="M0 1c9 0 18 3 24 10-8 2-16 5-22 12 4-8 4-14-2-22zM7 3c4 5 4 9 2 13M13 5c3 3 3 6 2 9" fill="#6796cb" stroke="#2f5a88" strokeWidth="1.200" />,
  oracle: <rect x="1.500" y="4.500" width="21" height="15" rx="6" fill="#6796cb" stroke="#35587f" strokeWidth="2.600" />,
  wms: <g><ellipse cx="12" cy="12" rx="11.500" ry="10.500" fill="#86add8" stroke="#3f6c9f" strokeWidth="1.500" /><path d="M4 6l6-1 1 4-4 4-3-3zM14 5l6 3-2 5-4-3zM9 15l4 1-1 5-3-2z" fill="#d8e6f5" /><path d="M2 9l4 3M12 3l2 5M15 15l4-2" stroke="#35587f" strokeWidth="1.500" /></g>,
  vt: <path d="M2.500 2.500h19v19h-19zM9 2.500v19M15 2.500v19M2.500 9h19M2.500 15h19" fill="#dce8f6" stroke="#222c3a" strokeWidth="1.800" />,
  xyz: <path d="M1 3h6v6H1zM9 3h6v6H9zM17 3h6v6h-6zM1 11h6v6H1zM9 11h6v6H9zM17 11h6v6h-6zM1 19h6v5H1zM9 19h6v5H9zM17 19h6v5h-6z" fill="#6796cb" />,
};

type Node = { label: string; icon: string; indent: string; open?: boolean; closed?: boolean; sel?: boolean };
const tree: Node[] = [
  { label: "PostgreSQL", icon: "pg", indent: "pl-1", open: true },
  { label: "localhost", icon: "conn", indent: "pl-[21px]", open: true },
  { label: "public", icon: "db", indent: "pl-[38px]", open: true },
  { label: "airports", icon: "pts", indent: "pl-[55px]", closed: true },
  { label: "rail", icon: "line", indent: "pl-[55px]", closed: true, sel: true },
  { label: "regions", icon: "poly", indent: "pl-[55px]", closed: true },
  { label: "trees_b", icon: "poly", indent: "pl-[55px]", closed: true },
  { label: "SAP HANA", icon: "hana", indent: "pl-1" },
  { label: "MS SQL Server", icon: "mssql", indent: "pl-1" },
  { label: "Oracle", icon: "oracle", indent: "pl-1" },
  { label: "WMS/WMTS", icon: "wms", indent: "pl-1" },
  { label: "Vector Tiles", icon: "vt", indent: "pl-1" },
  { label: "XYZ Tiles", icon: "xyz", indent: "pl-1", closed: true },
];

function Browser() {
  return (
    <>
      <DockTitle>Przeglądarka</DockTitle>
      <div className="flex h-[27px] shrink-0 items-center gap-[9px] pb-[5px] pl-2">
        {["addSel", "refresh", "funnel", "collapse", "info"].map((n) => <Ico key={n} size={16}>{miniIcons[n]}</Ico>)}
      </div>
      <div className="flex h-[298px] shrink-0 flex-col border border-[#b3b3b3]">
        <div className="flex min-h-0 flex-1">
          <div className="h-[279px] flex-1 overflow-hidden bg-white">
            {tree.map((n) => (
              <div key={n.label} className={`flex h-[22px] items-center ${n.indent} ${n.sel ? "bg-[#efefef]" : ""}`}>
                <div className="w-[10px] shrink-0">{n.open && <Tri />}{n.closed && <Tri dir="right" />}</div>
                <div className="mx-1.5 flex w-5 justify-center"><Ico size={n.icon === "conn" ? 15 : 20}>{treeIcons[n.icon]}</Ico></div>
                <span className="whitespace-nowrap pt-0.5 leading-5">{n.label}</span>
              </div>
            ))}
          </div>
          <div className="flex w-[17px] shrink-0 flex-col border-l border-[#b3b3b3] bg-[#e2e2e2]">
            <div className="flex h-[17px] items-center justify-center border-b border-[#b3b3b3] bg-[#f5f5f5]"><Tri dir="up" /></div>
            <div className="mt-[84px] h-[115px] border-y border-[#b3b3b3] bg-linear-to-r from-white to-[#efefef]" />
            <div className="mt-auto flex h-[17px] items-center justify-center border-t border-[#b3b3b3] bg-[#f5f5f5]"><Tri /></div>
          </div>
        </div>
        <HScroll />
      </div>
    </>
  );
}

type Layer = { label: string; cls: string; sw?: string; icon?: ReactNode; child?: boolean; on?: boolean; chip?: boolean; sel?: boolean; open?: boolean };
const off = "font-bold italic text-[#808080] text-[14.4px]";
const layers: Layer[] = [
  { label: "Zagregowane obiekty", cls: "font-bold italic underline text-[15px]", sw: "bg-[#00e8dc]", chip: true, sel: true },
  { label: "Różnica", cls: off, sw: "bg-[#d6b23c]", chip: true },
  { label: "trees_b", cls: off, icon: <Poly />, open: true },
  { label: "Deciduous", cls: "", sw: "bg-[#e96f0f]", child: true },
  { label: "Evergreen", cls: "", sw: "bg-[#00d900]", child: true },
  { label: "Mixed Trees", cls: "", sw: "bg-[#8800d4]", child: true },
  { label: "", cls: "", sw: "bg-[#68de9c]", child: true },
  { label: "airports", cls: "font-bold", icon: <circle cx="12" cy="12" r="5.500" fill="#c43c39" stroke="#333" strokeWidth="1.200" />, on: true },
  { label: "regions", cls: off, sw: "bg-[#e15989]" },
  { label: "Bufor_lot", cls: "font-bold", sw: "bg-[#85b66f]", on: true, chip: true },
  { label: "Bufor_kol", cls: off, sw: "bg-[#a47158]", chip: true },
  { label: "rail", cls: off, icon: <path d="M0 11.500h24" stroke="#b8917a" strokeWidth="2.400" /> },
];

function Layers() {
  return (
    <>
      <DockTitle>Warstwy</DockTitle>
      <div className="flex h-7 shrink-0 items-center gap-[9px] pb-1 pl-2">
        {["brush", "group", "eye", "funnelDrop", "epsilon", "", "expand", "collapse", "remove"].map((n, i) =>
          n ? <Ico key={i} size={16}>{miniIcons[n]}</Ico> : <Tri key={i} className="-ml-1 -mr-px" />
        )}
      </div>
      <div className="flex h-[383px] shrink-0 flex-col border border-[#b3b3b3] bg-white">
        <div className="flex-1">
          {layers.map((l, i) => (
            <div key={i} className={`relative flex h-[22px] items-center pt-px ${l.child ? "pl-[53px]" : "pl-7"} ${l.sel ? "bg-[#efefef]" : ""}`}>
              {l.open && <div className="-ml-5 w-5"><Tri /></div>}
              <Check on={l.on} />
              <div className="mx-1.5 flex size-[19px] shrink-0 items-center justify-center">
                {l.sw ? <div className={`size-[19px] border border-[#333]/80 ${l.sw}`} /> : <Ico size={20}>{l.icon}</Ico>}
              </div>
              <span className={`ml-px whitespace-nowrap leading-5 ${l.cls}`}>{l.label}</span>
              {l.chip && (
                <div className="absolute right-[7px] top-[2px] flex size-[19px] items-center justify-center rounded-[3px] border border-[#dcdcdc] bg-[#f4f4f4]">
                  <svg width="13" height="13" viewBox="0 0 13 13" fill="none" stroke="#7c7c7c"><rect x=".7" y="3.700" width="11.600" height="5.600" rx="1" strokeWidth="1.400" /><path d="M2.500 3.500v-2M5.500 3.500v-2M8 3.500v-2M10.500 3.500v-2M2.500 11.500v-2M5.500 11.500v-2M8 11.500v-2M10.500 11.500v-2" /></svg>
                </div>
              )}
            </div>
          ))}
        </div>
        <HScroll />
      </div>
    </>
  );
}

/* ---------- map ---------- */

const airports: [number, number][] = [
  [661.9, 303], [741.4, 329], [664, 331], [704.9, 347], [567.9, 369], [583.9, 385], [684, 370], [678.9, 394], [678.9, 413], [662, 421],
  [602, 420], [680.9, 456], [485.7, 425], [507, 434], [752, 427], [842.9, 338], [807.8, 376], [835.9, 409], [833.9, 463], [946, 343.3],
  [913.8, 418.2], [910, 420], [924, 424], [889.8, 432], [889.8, 443], [952, 449], [998, 468], [1027, 480], [607.8, 493], [626, 525],
  [571.8, 528], [557, 584], [687, 508], [696, 553], [647, 581], [772.7, 501], [766, 503], [772, 577], [965.9, 523], [877, 525],
  [899, 553], [885, 557], [858.8, 597.5], [863, 602], [889, 568], [887.5, 568.5], [885.5, 569.5], [882, 572], [896, 614], [855, 636],
  [956, 567], [974, 591], [784, 633], [777, 649], [709, 659], [747, 676], [632, 668], [836, 715], [700, 743.8], [600, 806],
  [447, 695], [453, 722], [501, 844], [438, 871], [301.2, 864], [1098, 611], [1186, 590], [1185, 600], [1190, 634], [1200, 645],
  [1245, 680], [1267, 680], [1284, 688], [1280, 728], [1320, 738],
];
const ring = Array.from({ length: 20 }, (_, i) => `${(36.8 * Math.cos((i * Math.PI) / 10)).toFixed(2)},${(36.8 * Math.sin((i * Math.PI) / 10)).toFixed(2)}`).join(" ");

function MapCanvas() {
  return (
    <svg width="1323" height="786" viewBox="242 184 1323 786" className="block">
      <g fill="#85b66f" stroke="#232323" strokeWidth="1.100">
        {airports.map(([x, y], i) => <polygon key={i} points={ring} transform={`translate(${x} ${y})`} />)}
      </g>
      <g fill="#c43c39" stroke="#232323" strokeWidth="1">
        {airports.map(([x, y], i) => <circle key={i} cx={x} cy={y} r="4.700" />)}
      </g>
    </svg>
  );
}

/* ---------- buffer dialog ---------- */

const helpText = [
  ["Algorytm oblicza", "obszar bufora dla", "wszystkich obiektów", "warstwy wejściowej", "wykorzystując stałą", "lub zmienna szerokość", "bufora."],
  ["Parametr liczby", "segmentów określa", "stopień zaokrąglenia", "załamań bufora."],
  ["Parametr stylu", "zakończenia określa", "jak będą traktowane", "zakończenia linii w", "buforze."],
  ["Parametr stylu", "połączenia określa w", "jaki sposób łączone", "będą linie podczas", "tworzenia bufora", "wokół załamań linii."],
  ["Parametr limitu fazy", "(uciosu) może być", "zastosowany tylko dla", "ostrych połączeń i", "określa"],
];

const MoreBtn = ({ h }: { h: string }) => (
  <div className={`relative flex w-[27px] items-end justify-center pb-1 ${BOX} ${GRAD} ${h}`}>
    <span className="pb-0.5 leading-[10px]">...</span>
    <Tri className="absolute bottom-0.5 right-0 scale-90" />
  </div>
);

function Dialog() {
  return (
    <div className={`absolute left-[1293px] top-0 flex h-[660px] w-[660px] flex-col border border-t-0 border-[#8c8c8c] bg-[#efefef] shadow-[0_4px_18px_rgba(0,0,0,0.5)] ${DLG}`}>
      <div className="flex h-[29px] shrink-0 items-start bg-white pl-[9px]">
        <svg width="20" height="20" viewBox="0 0 20 20" fill="none" className="shrink-0">
          <circle cx="9.500" cy="9.500" r="7.500" stroke="#5f9c28" strokeWidth="3.800" /><path d="M4 4.500a7.500 7.500 0 0 1 11 0" stroke="#93b023" strokeWidth="2" /><path d="M9 9l9.500 10.500" stroke="#fff" strokeWidth="5" /><path d="M9.500 9.500h4l6 6.500v4h-4l-6-6z" fill="#5f9c28" /><path d="M8 8h4v4H8z" fill="#ee7913" />
        </svg>
        <span className="ml-1.5 mt-px font-['Open_Sans',sans-serif] text-[14px] leading-5 text-[#999]">Otoczka</span>
        <svg width="12" height="12" viewBox="0 0 12 12" className="ml-[531px] mt-1 shrink-0"><path d="M0 0l12 12M12 0L0 12" stroke="#666" /></svg>
      </div>

      <div className="flex shrink-0 pl-[13px] pt-[13px]">
        <div className="flex w-[446px] flex-col">
          <div className="flex h-[29px] items-end">
            <div className="relative z-10 -mb-px flex h-[30px] w-[90px] items-center justify-center rounded-t-[3px] border border-b-0 border-[#b0b0b0] bg-[#fafafa] pt-0.5">Parametry</div>
            <div className="flex h-[27px] w-[97px] items-center justify-center rounded-tr-[3px] border border-b-0 border-l-0 border-[#b0b0b0] bg-[#e6e6e6] pt-[3px]">Plik zdarzeń</div>
          </div>
          <div className="flex h-[487px] flex-col border border-[#a9a9a9] px-[5px]">
            <Label className="mt-1.5">Warstwa wejściowa</Label>
            <div className="mt-1.5 flex h-7 items-start">
              <Combo className="h-7 w-[325px] pl-2 pr-[8px]"><Ico size={17}><g transform="translate(-3 0)"><Dots /></g></Ico><span className="ml-1 pt-px">airports [EPSG:2964]</span></Combo>
              <svg width="26" height="26" viewBox="0 0 26 26" fill="none" className="ml-[9px] mt-px">
                <path d="M11 5H6.500a3 3 0 0 0-3 3v8a3 3 0 0 0 3 3H8M15 21h4.500a3 3 0 0 0 3-3v-8a3 3 0 0 0-3-3H18" stroke="#3f7a48" strokeWidth="4.600" />
                <path d="M11 5H6.500a3 3 0 0 0-3 3v8a3 3 0 0 0 3 3H8M15 21h4.500a3 3 0 0 0 3-3v-8a3 3 0 0 0-3-3H18" stroke="#80bd88" strokeWidth="3" />
                <path d="M9 1l5 4-5 4zM7 15l5 4-5 4zM19 3l-5 4 5 4zM17 17l-5 4 5 4z" fill="#80bd88" stroke="#3f7a48" strokeWidth=".7" />
              </svg>
              <svg width="28" height="26" viewBox="0 0 28 26" className="ml-2.5 mt-px"><path d="M1 8c1 4 5 6 8.500 5l4 3.500 3-3-3.500-4C14 6 11 1.500 6.500 2l3 3-1 3.500-3.500.5z" fill="#e6e6e6" stroke="#444" /><path d="M13.500 15.500L24 25.500l3-3-10.500-9.500z" fill="#f0d879" stroke="#555" strokeWidth=".8" /></svg>
              <div className="ml-[9px]"><MoreBtn h="h-[23px]" /></div>
            </div>
            <div className="mt-2 flex h-[17px] items-center text-[#808080]"><Check off /><span className="ml-1.5 pt-px">Tylko zaznaczone obiekty</span></div>
            <Label className="mt-[11px]">Odległość</Label>
            <div className="mt-2 flex h-6">
              <div className={`flex h-6 w-[299px] items-center bg-white pl-1 ${BOX}`}><span className="flex-1 pt-0.5">100,000000</span><Clear /><div className="w-3" /><Steps w="w-4" /></div>
              <Combo className="ml-3 h-6 w-[84px] pl-1">kilometry</Combo>
              <svg width="27" height="22" viewBox="0 0 27 22" fill="none" className="ml-[10px] mt-0.5"><path d="M6 4L1 10l5 6V4z" fill="#888" stroke="#555" /><path d="M6.500 1.500h13v17h-13z" fill="#f4f4f4" stroke="#666" strokeWidth="1.400" /><path d="M8.500 5.500h9M8.500 10h9M8.500 14.500h6" stroke="#555" strokeWidth="1.600" /><path d="M16 14h10l-5 5z" fill="#444" /></svg>
            </div>
            <Label className="mt-2.5">Segmenty</Label>
            <div className={`mt-[7px] flex h-[23px] items-center bg-white pl-1 ${BOX}`}><span className="flex-1 pt-0.5">5</span><Steps /></div>
            <Label className="mt-[9px]">Styl zakończenia</Label>
            <Combo className="mt-1.5 h-6 pl-1">zaokrąglony</Combo>
            <Label className="mt-2">Styl połączenia</Label>
            <Combo className="mt-1.5 h-6 pl-1">zaokrąglony</Combo>
            <Label className="mt-2">Limit fazy (uciosu)</Label>
            <div className={`mt-[7px] flex h-[23px] items-center bg-white pl-1 ${BOX}`}><span className="flex-1 pt-0.5">2,000000</span><Steps /></div>
            <div className="mt-[11px] flex h-[17px] items-center"><Check /><span className="ml-1.5 pt-px">Agreguj wyniki</span></div>
            <Label className="mt-2.5">Bufor</Label>
            <div className="mt-1.5 flex h-6 justify-between">
              <div className={`flex h-6 w-[400px] items-center bg-white pl-0.5 pt-px text-[#808080] ${BOX}`}>[Twórz warstwę tymczasową]</div>
              <MoreBtn h="h-6" />
            </div>
            <div className="mt-2.5 flex h-[17px] items-center"><Check on /><span className="ml-1.5 pt-px">Wczytaj plik wynikowy po zakończeniu</span></div>
          </div>
        </div>
        <div className="flex w-4 flex-col items-center pt-px"><Tri dir="right" className="-ml-1" /><div className="mt-[241px]"><Dotted v /></div></div>
        <div className="flex h-[516px] w-[160px] shrink-0 border border-[#b3b3b3] bg-white">
          <div className="h-full w-[140px] overflow-hidden whitespace-nowrap pl-1 pt-2 text-[#606060]">
            <div className="text-[19.6px] font-bold leading-[20px] text-[#505050]">Otoczka</div>
            {helpText.map((p, i) => (
              <p key={i} className="mt-3 leading-4 first-of-type:mt-[13px]">
                {p.map((line) => <span key={line} className="block">{line}</span>)}
              </p>
            ))}
          </div>
          <div className="flex flex-1 flex-col border-l border-[#b3b3b3]">
            <div className="flex h-[17px] justify-start border-b border-[#b3b3b3] pl-[3px] pt-[3px]"><Tri dir="up" /></div>
            <div className="h-[411px] border-b border-[#b3b3b3] bg-white" />
            <div className="flex-1 bg-[#e2e2e2]" />
            <div className="flex h-[17px] justify-start border-t border-[#b3b3b3] pl-[3px] pt-[3px]"><Tri /></div>
          </div>
        </div>
      </div>

      <div className="mt-[31px] flex shrink-0 gap-[7px] pl-[13px]">
        <div className={`flex h-6 w-[534px] items-center justify-center bg-white pt-px ${BOX}`}>0%</div>
        <Button className="h-[25px] w-[80px] text-[#909090]">Anuluj</Button>
      </div>
      <div className="mt-[7px] flex shrink-0 gap-[7px] pl-[13px] text-[12.8px]">
        <Button className="h-[25px] w-[113px] gap-[5px]">Zaawansowane<Tri className="-mt-0.5" /></Button>
        <Button className="h-[25px] w-[240px]">Wykonaj jako przetwarzanie wsadowe...</Button>
        <Button className="h-[25px] w-[80px]">Uruchom</Button>
        <Button className="h-[25px] w-[80px]">Zamknij</Button>
        <Button className="h-[25px] w-[80px]">Pomoc</Button>
      </div>
    </div>
  );
}

/* ---------- status bar ---------- */

function StatusBar() {
  return (
    <div className={`flex h-[27px] shrink-0 items-center whitespace-nowrap pt-[5px] ${DLG}`}>
      <div className="ml-1 flex h-[27px] w-[232px] items-center rounded-[3px] border border-[#a6a6a6] bg-white text-[#808080]">
        <svg width="16" height="16" viewBox="0 0 16 16" fill="none" stroke="#8a8a8a" strokeWidth="1.500" className="ml-[9px] mr-2"><circle cx="6.500" cy="6" r="5" /><path d="M10 10l5 5" strokeWidth="2" /></svg>
        Szukana fraza (Ctrl+K)
      </div>
      <div className="ml-[711px] w-[79px]">Współrzędne</div>
      <div className={`h-[27px] w-[121px] bg-white pl-1.5 leading-[24px] ${BOX}`}>-5007550 7455121</div>
      <svg width="20" height="20" viewBox="0 0 20 20" fill="none" stroke="#111" className="ml-1"><path d="M1 2l5-1 9 10-3 5L2 9z" fill="#222" /><path d="M3 4l9 9M3 8l9 2" stroke="#fff" strokeWidth="1.300" /><circle cx="13" cy="15" r="4" fill="#fff" strokeWidth="1.500" /><circle cx="13" cy="15" r="1.500" fill="#111" /><path d="M12 5l6-5M13 8l6-4" strokeWidth="1.500" /></svg>
      <div className="ml-[13px] w-[35px]">Skala</div>
      <div className={`flex h-[27px] w-[91px] items-center bg-white ${BOX}`}><span className="w-[66px]">.:12848599</span><div className={`flex h-full flex-1 items-center justify-center pr-0.5 ${GRAD}`}><Tri /></div></div>
      <svg width="17" height="20" viewBox="0 0 17 20" fill="none" className="ml-3"><path d="M4 10V5.500a4.500 4.500 0 0 1 9 0V10" stroke="#999" strokeWidth="2.400" /><rect x=".5" y="9" width="16" height="10.500" rx="2" fill="#555" /></svg>
      <div className="ml-[9px] w-[79px]">Powiększenie</div>
      <div className={`flex h-[27px] w-[92px] items-center bg-white ${BOX}`}><span className="flex-1 pl-1">100%</span><Steps /></div>
      <div className="ml-[11px] w-[68px]">Kąt obrotu</div>
      <div className={`flex h-[27px] w-[88px] items-center bg-white ${BOX}`}><span className="flex-1 pl-1">0,0 °</span><Steps /></div>
      <div className="ml-[7px]"><Check on /></div>
      <div className="ml-1.5 w-[67px]">Renderuj</div>
      <svg width="20" height="18" viewBox="0 0 20 18" fill="none" stroke="#666"><ellipse cx="10" cy="9" rx="9" ry="8" fill="#999" /><path d="M1 9h18M3 4.500h14M3 13.500h14M10 1v16M6 1.500c-3 5-3 10 0 15M14 1.500c3 5 3 10 0 15" stroke="#eee" strokeWidth=".9" /></svg>
      <div className="ml-0.5 w-[87px]">EPSG:2964</div>
      <svg width="21" height="19" viewBox="0 0 21 19" className="shrink-0"><path d="M10.500 0C16.500 0 20.500 3.500 20.500 8s-3 7-7 7.600C15 18 16 18.500 17 19c-4 0-6-1.500-7-3C4 16 .5 12.500 .5 8S4.500 0 10.500 0z" fill="#606060" /><circle cx="6" cy="8" r="1.500" fill="#fff" /><circle cx="10.500" cy="8" r="1.500" fill="#fff" /><circle cx="15" cy="8" r="1.500" fill="#fff" /></svg>
    </div>
  );
}

export default function App() {
  return (
    <div className={`relative flex h-[998px] w-[1918px] flex-col overflow-hidden bg-[#efefef] text-black ${UI}`}>
      <div className="h-0.5 shrink-0 bg-white" />
      <div className="flex h-[25px] shrink-0 items-center border-b border-[#cfcfcf] pl-[11.5px] pt-0.5">
        {menu.map(([a, u, b, w]) => (
          <div key={a + u + b} className={`shrink-0 whitespace-pre leading-5 ${w}`}>{a}<span className="underline underline-offset-2">{u}</span>{b}</div>
        ))}
      </div>

      <Toolbar>
        <Items list="newFile open save layout manager style - *hand pan zoomIn zoomOut zoomFull zoomSel zoomLayer ~zoomNative zoomLast ~zoomNext newMap map3d bookmark bookmarks clock refresh - identify abacus *gear sigma table v measure v note ~action V" />
      </Toolbar>
      <Toolbar>
        <Items list="datasource geopackage newShape feather chip mesh newVirtual - ~edits pencil ~saveEdits ~addPoly ~vertex V ~tableEdit ~trash ~cut ~copy ~paste ~undo ~redo - abc diagram | pinLabel abcRed | ~tagPin ~tagEye ~tagMove ~tagRotate ~tagEdit - globeAdd globeFind binoculars - python - help - sheet" />
      </Toolbar>
      <Toolbar>
        <Items list="*magnet snapV *snapPts" />
        <div className={`flex h-6 w-[93px] items-center bg-white pl-1 ${BOX} ${DLG}`}><span className="flex-1 pt-0.5">12</span><Clear /><div className="w-3" /><Steps w="w-4" /></div>
        <Combo className={`ml-px h-6 w-[100px] pl-1 ${DLG}`}>px</Combo>
        <Items list="topo overlap cross selfSnap v trace" />
      </Toolbar>
      <Toolbar last>
        <Items list="select v selForm v deselect v selLoc - ~mesh1 ~mesh2 V ~mesh3 ~mesh4 V - annot v selAnnot polyAnnot lineAnnot starAnnot textAnnot | textBox v" />
      </Toolbar>

      <div className="flex h-[789px] shrink-0">
        <div className="flex w-[234px] shrink-0 flex-col">
          <Browser />
          <div className="flex h-[5px] shrink-0 items-end justify-center"><Dotted /></div>
          <Layers />
        </div>
        <div className="flex w-[7px] shrink-0 items-center justify-center"><Dotted v /></div>
        <div className="mt-px h-[788px] w-[1325px] shrink-0 border border-[#b3b3b3] bg-white"><MapCanvas /></div>
        <div className={`ml-[7px] flex w-[360px] shrink-0 flex-col ${DLG}`}>
          <div className="mt-px h-[579px] border border-[#b3b3b3] bg-white" />
          <div className="flex h-[5px] items-center pl-[166px]"><Dotted /></div>
          <div className="flex-1 border border-[#b3b3b3] bg-white px-1 pt-[5px] leading-4">
            <div><b className="text-[12.4px]">Algorithm:</b> Statystyki</div>
            <div><b className="text-[12.4px]">File path:</b> <span className="text-[#0000ff] underline">C:</span></div>
            <div className="whitespace-nowrap text-[12.8px] text-[#0000ff] underline">
              <div>\Users\Dell7520\AppData\Local\Temp\processing_MpiGWf</div>
              <div>\af07d0996c2e448fbf4588ebee14f2bd\OUTPUT_HTML_FIL</div>
              <div>E.html</div>
            </div>
          </div>
        </div>
      </div>
      <StatusBar />
      <Dialog />
    </div>
  );
}
